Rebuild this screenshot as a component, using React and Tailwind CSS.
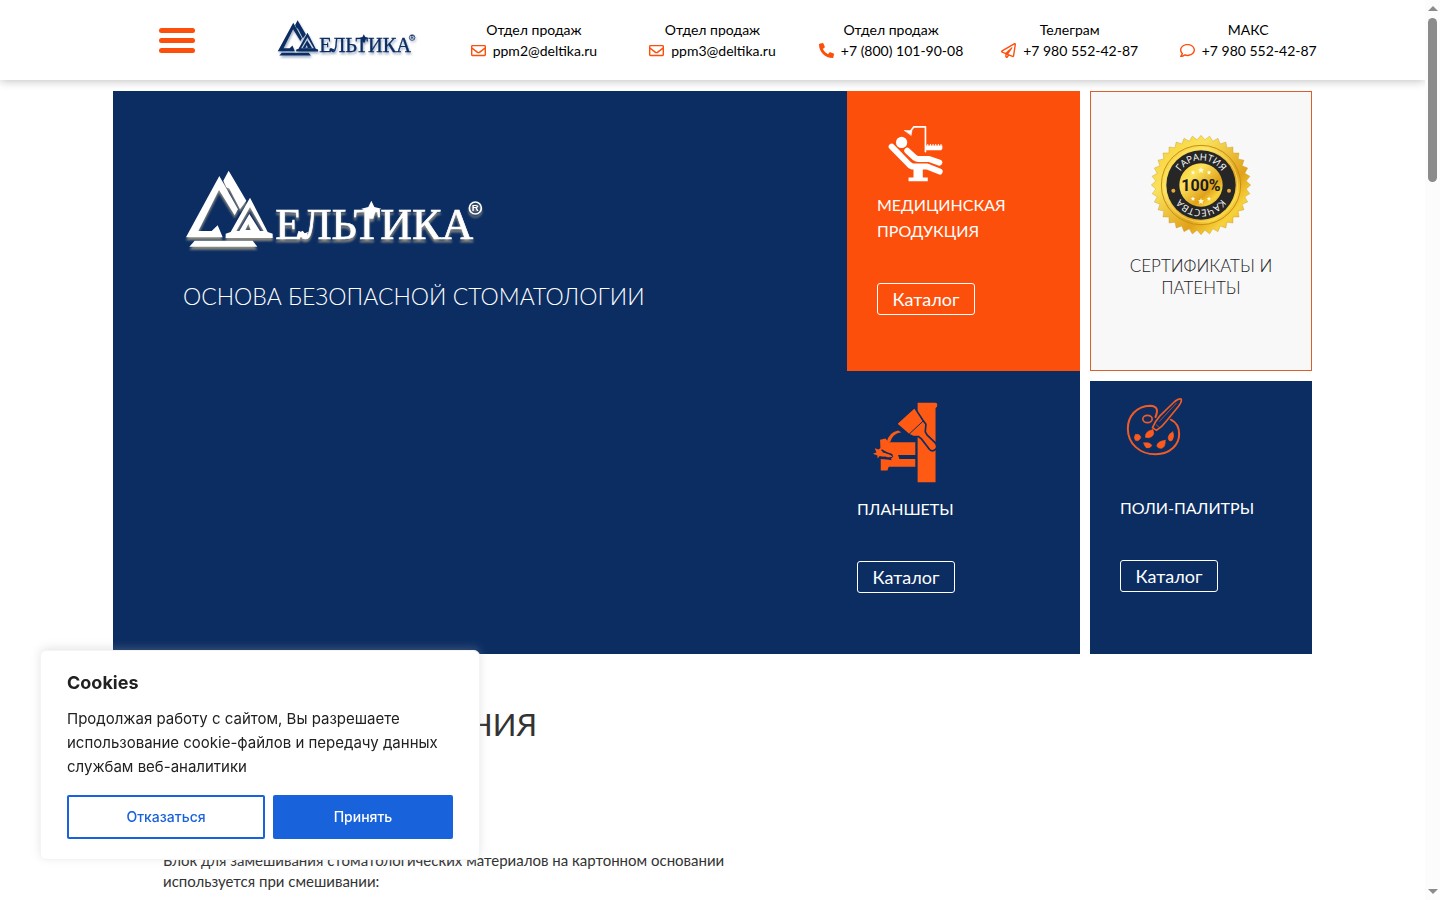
import React from 'react';
import { FaPhoneAlt, FaRegComment, FaRegEnvelope, FaRegPaperPlane } from 'react-icons/fa';

const contacts = [
  { title: 'Отдел продаж', text: 'ppm2@deltika.ru', href: 'mailto:ppm2@deltika.ru', Icon: FaRegEnvelope },
  { title: 'Отдел продаж', text: 'ppm3@deltika.ru', href: 'mailto:ppm3@deltika.ru', Icon: FaRegEnvelope },
  { title: 'Отдел продаж', text: '+7 (800) 101-90-08', href: 'tel:+78001019008', Icon: FaPhoneAlt },
  { title: 'Телеграм', text: '+7 980 552-42-87', href: 'tel:+79805524287', Icon: FaRegPaperPlane },
  { title: 'МАКС', text: '+7 980 552-42-87', href: 'tel:+79805524287', Icon: FaRegComment },
];

function Logo({ className }) {
  return (
    <svg viewBox="39 54 906 252" className={className} fill="currentColor" role="img" aria-label="Дельтика">
      <path d="M148 78 L204 178 L194 196 L147 120 L85 243 H125 L143 226 L158 262 H48 Z" />
      <path d="M160 92 L176 62 L229 152 L210 178 L178 116 L169 112 Z" />
      <path fillRule="evenodd" d="M240 143 L293 246 L308 251 V264 H167 V251 L182 246 Z M240 172 L199 243 H281 Z" />
      <path fillRule="evenodd" d="M238 192 L270 243 H208 Z M235 222 L226 240 H242 Z" />
      <path d="M74 272 H248 L262 290 H58 Z" />
      <text x="316" y="266" fontSize="132" fontFamily="'Liberation Serif', serif" stroke="currentColor" strokeWidth="2">
        ЕЛЬТИКА
      </text>
      <path d="M604 152 L613 171 L634 176 L616 186 L610 206 H598 L592 186 L574 176 L595 171 Z" />
      <path d="M384 250 l14 -8 l6 8 l10 -4 l-4 12 l-24 6 z" />
      <circle cx="916" cy="174" r="18" fill="none" stroke="currentColor" strokeWidth="5" />
      <text x="916" y="184" fontSize="29" fontWeight="700" textAnchor="middle" fontFamily="'Liberation Sans', sans-serif">
        R
      </text>
    </svg>
  );
}

function ChairIcon() {
  return (
    <svg viewBox="144 104 166 171" className="w-[55px] h-[57px]" fill="none" stroke="currentColor" strokeLinecap="round" strokeLinejoin="round">
      <circle cx="185" cy="156" r="17" fill="currentColor" stroke="none" />
      <path d="M155 169 L207 222 Q213 229 222 229 H262 L300 244" strokeWidth="18" />
      <path d="M202 181 L226 203 Q230 206 236 206 H268 L299 217" strokeWidth="18" />
      <path d="M221 232 H249 V262 H264 V273 H206 V262 H221 Z" fill="currentColor" stroke="none" />
      <path d="M212 122 L222 109 H257 V184" strokeWidth="5" />
      <path d="M194 120 L216 121 L214 134 Z" fill="currentColor" strokeWidth="2" />
      <path d="M257 165 H308 V176 L304 180 H257 Z" fill="currentColor" stroke="none" />
      <path d="M264 162 V168 M272 162 V168 M280 162 V168 M288 162 V168 M296 162 V168 M304 162 V168" strokeWidth="3" />
    </svg>
  );
}

function SpatulaIcon() {
  return (
    <svg viewBox="82 66 198 244" className="w-[66px] h-[81px]" fill="#ff5a14">
      <path d="M219 68 H272 Q279 68 278 76 Q278 82 273 84 V308 H219 Z" />
      <path d="M132 187 H212 V226 H160 L164 238 H212 V261 H132 L128 272 H108 V238 L135 240 L146 230 L140 222 L120 216 L107 206 L106 180 L122 176 Z" />
      <path d="M126 187 Q132 158 160 152 L170 157 Q144 160 136 187 Z" />
      <path d="M84 222 L95 218 L90 205 L101 209 L110 203 L114 218 L132 222 L144 231 L122 234 L105 229 L98 236 L98 227 Z" />
      <path d="M110 210 L126 219 L143 225 M108 233 L122 232 L140 240" fill="none" stroke="#0b2d62" strokeWidth="4" />
      <path
        d="M208 84 Q210 83 212 86 L235 121 L244 133 L242 156 L248 166 L273 190 Q280 200 273 209 Q263 217 255 209 L231 178 L222 170 H205 L191 163 L158 134 Q156 131 159 128 Z"
        stroke="#0b2d62"
        strokeWidth="5"
      />
      <path d="M192 164 L236 123" stroke="#0b2d62" strokeWidth="3" />
    </svg>
  );
}

function PaletteIcon() {
  return (
    <svg viewBox="124 98 170 174" className="w-[57px] h-[58px]" fill="#ff5a1c" stroke="#f25a26" strokeLinecap="round" strokeLinejoin="round">
      <path d="M212 155 Q226 122 196 121 C154 122 129 154 129 190 C129 235 165 267 212 267 C257 267 283 237 283 207 C283 183 273 170 258 163" fill="none" strokeWidth="6" />
      <ellipse cx="188" cy="161" rx="14" ry="11" fill="none" strokeWidth="5" />
      <path d="M289 101 Q292 108 281 123 L243 169 Q230 186 215 195 L203 187 Q210 169 226 151 L268 110 Q282 99 289 101 Z" fill="none" strokeWidth="5" />
      <path d="M214 178 L224 187 M224 168 L274 114" fill="none" strokeWidth="2" />
      <path d="M204 193 Q211 207 200 214 Q191 219 182 216 Q180 197 204 193 Z" strokeWidth="2" />
      <path d="M152 208 Q164 204 168 216 Q162 230 152 225 Q145 216 152 208 Z" strokeWidth="2" />
      <path d="M177 233 Q196 229 201 241 Q194 250 184 247 Q178 241 177 233 Z" strokeWidth="2" />
      <path d="M241 225 Q243 245 230 249 Q219 250 216 242 Q216 229 241 225 Z" strokeWidth="2" />
      <path d="M264 200 Q270 213 262 225 Q250 231 250 215 Q253 203 264 200 Z" strokeWidth="2" />
    </svg>
  );
}

// 36 teeth around the rim
const sealPoints = Array.from({ length: 72 }, (_, i) => {
  const r = i % 2 ? 136 : 149;
  const a = (i * Math.PI) / 36;
  return `${(r * Math.sin(a)).toFixed(1)},${(-r * Math.cos(a)).toFixed(1)}`;
}).join(' ');

const sealStars = [
  { x: -24, y: -38, s: 0.8 },
  { x: 0, y: -45, s: 1.1 },
  { x: 24, y: -38, s: 0.8 },
  { x: -24, y: 41, s: 0.8 },
  { x: 0, y: 48, s: 1.1 },
  { x: 24, y: 41, s: 0.8 },
];

function Seal() {
  return (
    <svg viewBox="-150 -150 300 300" className="w-[100px] h-[100px]" role="img" aria-label="Гарантия качества 100%">
      <defs>
        <linearGradient id="gold" x1="0" y1="0" x2="1" y2="1">
          <stop offset="0" stopColor="#f6c928" />
          <stop offset="0.3" stopColor="#fbe25c" />
          <stop offset="0.65" stopColor="#e0a21a" />
          <stop offset="0.8" stopColor="#f8d23a" />
          <stop offset="1" stopColor="#dc9a18" />
        </linearGradient>
        <path id="arcTop" d="M-74 0 A74 74 0 0 1 74 0" />
        <path id="arcBottom" d="M74 0 A74 74 0 0 1 -74 0" />
      </defs>
      <polygon points={sealPoints} fill="url(#gold)" stroke="#b98a1c" strokeWidth="1" />
      <circle r="119" fill="url(#gold)" stroke="#c98e14" strokeWidth="3" />
      <circle r="110" fill="none" stroke="#fbe884" strokeWidth="2" />
      <circle r="104" fill="#262626" />
      <circle r="65" fill="url(#gold)" />
      <circle cx="-83" cy="17" r="6" fill="#e8a93a" />
      <circle cx="84" cy="17" r="6" fill="#e8a93a" />
      <g fill="#fff" fontFamily="'Open Sans', sans-serif" fontSize="29" textAnchor="middle">
        <text>
          <textPath href="#arcTop" startOffset="50%">ГАРАНТИЯ</textPath>
        </text>
        <text>
          <textPath href="#arcBottom" startOffset="50%">КАЧЕСТВА</textPath>
        </text>
      </g>
      {sealStars.map((s) => (
        <path
          key={`${s.x} ${s.y}`}
          transform={`translate(${s.x} ${s.y}) scale(${s.s})`}
          fill="#fffbe0"
          d="M0 -8 L2 -3 L8 -2 L4 2 L5 8 L0 5 L-5 8 L-4 2 L-8 -2 L-2 -3 Z"
        />
      ))}
      <text y="19" fontSize="48" fontWeight="700" textAnchor="middle" fontFamily="Roboto, sans-serif" fill="#1c1c1c">
        100%
      </text>
    </svg>
  );
}

function CatalogLink() {
  return (
    <a href="#catalog" className="flex items-center justify-center w-[98px] h-8 border border-white rounded-[3px] text-lg">
      Каталог
    </a>
  );
}

function Header() {
  return (
    <header className="sticky top-0 z-10 h-20 bg-white shadow-[0_0_10px_rgba(0,0,0,0.3)]">
      <div className="max-w-[1250px] h-full mx-auto grid grid-cols-7 items-center">
        <button type="button" aria-label="Меню" className="flex flex-col gap-[5px] mx-auto">
          <span className="w-9 h-[5px] rounded-full bg-[#fd4f0c]" />
          <span className="w-9 h-[5px] rounded-full bg-[#fd4f0c]" />
          <span className="w-9 h-[5px] rounded-full bg-[#fd4f0c]" />
        </button>
        <a href="/" className="pl-[10px] pb-[3px]">
          <Logo className="w-[141px] h-[39px] text-[#0b2d62] drop-shadow-[1px_2px_1px_rgba(60,90,140,0.5)]" />
        </a>
        {contacts.map(({ title, text, href, Icon }, i) => (
          <div key={i} className="flex flex-col items-center text-sm leading-[21px] text-black whitespace-nowrap">
            <span>{title}</span>
            <a href={href} className="flex items-center gap-[7px]">
              <Icon size={15} className="text-[#fd4f0c]" />
              {text}
            </a>
          </div>
        ))}
      </div>
    </header>
  );
}

function Hero() {
  return (
    <section className="max-w-[1199px] mx-auto mt-[11px] flex gap-[10px] text-white">
      <div className="flex-1 flex bg-[#0b2d62]">
        <div className="flex-1 pl-[70px] pt-[77px]">
          <Logo className="w-[302px] h-[84px] drop-shadow-[0_3px_1px_rgba(150,145,130,0.9)]" />
          <h1 className="mt-7 text-[23px] leading-8 font-light">ОСНОВА БЕЗОПАСНОЙ СТОМАТОЛОГИИ</h1>
        </div>
        <div className="w-[233px]">
          <div className="h-[280px] px-[30px] pt-[34px] bg-[#fd4f0c]">
            <div className="pl-[11px]">
              <ChairIcon />
            </div>
            <h2 className="mt-[10px] mb-[39px] text-base leading-[26px]">МЕДИЦИНСКАЯ ПРОДУКЦИЯ</h2>
            <CatalogLink />
          </div>
          <div className="h-[283px] px-[10px] pt-[31px]">
            <div className="pl-[15px]">
              <SpatulaIcon />
            </div>
            <h2 className="mt-[13px] mb-[39px] text-base leading-[26px]">ПЛАНШЕТЫ</h2>
            <CatalogLink />
          </div>
        </div>
      </div>
      <div className="w-[222px] flex flex-col gap-[10px]">
        <a href="#certificates" className="h-[280px] flex flex-col items-center px-5 pt-[43px] bg-[#f8f8f8] border border-[#d8602c] text-[#222] text-center">
          <Seal />
          <span className="mt-5 text-[17px] leading-[22px] font-light">СЕРТИФИКАТЫ И ПАТЕНТЫ</span>
        </a>
        <div className="flex-1 px-[30px] pt-[17px] bg-[#0b2d62]">
          <div className="pl-[6px]">
            <PaletteIcon />
          </div>
          <h2 className="mt-[39px] mb-[39px] text-base leading-[26px]">ПОЛИ-ПАЛИТРЫ</h2>
          <CatalogLink />
        </div>
      </div>
    </section>
  );
}

function CookieBanner() {
  return (
    <div role="dialog" aria-label="Cookies" className="fixed left-10 bottom-10 z-20 w-[440px] px-[26px] py-5 bg-white border border-[#f4f4f4] rounded-md shadow-[0_-2px_10px_rgba(172,171,171,0.3)] font-[Inter,sans-serif] text-[#212121]">
      <p className="text-lg leading-6 font-bold">Cookies</p>
      <p className="mt-3 mb-4 text-[15px] leading-6">
        Продолжая работу с сайтом, Вы разрешаете использование cookie-файлов и передачу данных службам веб-аналитики
      </p>
      <div className="flex gap-2 text-sm font-medium">
        <button type="button" className="w-[198px] h-11 border-2 border-[#1863dc] rounded-xs text-[#1863dc]">
          Отказаться
        </button>
        <button type="button" className="flex-1 h-11 rounded-xs bg-[#1863dc] text-white">
          Принять
        </button>
      </div>
    </div>
  );
}

function Scrollbar() {
  return (
    <div aria-hidden="true" className="fixed right-0 inset-y-0 z-30 w-[15px] py-[6px] flex flex-col items-center bg-[#fcfcfc]">
      <span className="border-x-[5px] border-b-[5px] border-x-transparent border-b-[#8b8b8b]" />
      <span className="mt-[7px] w-[9px] h-[164px] rounded-full bg-[#8b8b8b]" />
      <span className="mt-auto border-x-[5px] border-t-[5px] border-x-transparent border-t-[#8b8b8b]" />
    </div>
  );
}

export default function App() {
  return (
    <div className="min-h-screen pr-[15px] bg-white font-[Lato,sans-serif]">
      <Header />
      <main>
        <Hero />
        <section className="max-w-[1199px] mx-auto px-[50px] pt-[50px] text-[#333]">
          <h2 className="text-[31px] leading-10">ОБЛАСТЬ ПРИМЕНЕНИЯ</h2>
          <p className="max-w-[570px] mt-[106px] text-[15px] leading-[21px]">
            Блок для замешивания стоматологических материалов на картонном основании используется при смешивании:
          </p>
        </section>
      </main>
      <CookieBanner />
      <Scrollbar />
    </div>
  );
}
